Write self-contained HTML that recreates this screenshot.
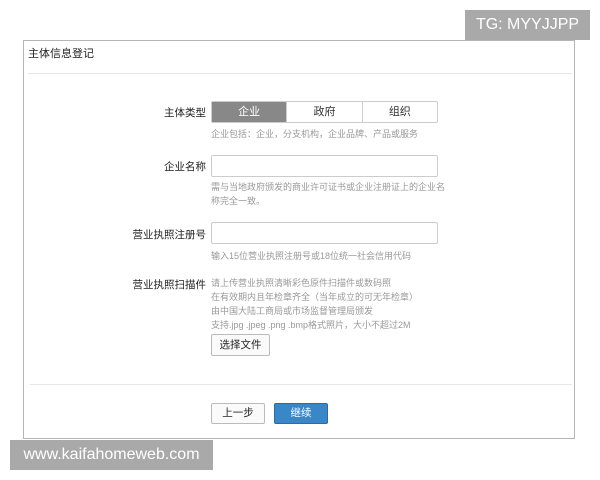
<!DOCTYPE html>
<html><head><meta charset="utf-8"><style>
*{margin:0;padding:0;box-sizing:border-box}
body{width:600px;height:480px;background:#fff;position:relative;font-family:"Liberation Sans","Noto Sans CJK SC",sans-serif;overflow:hidden}
.a{position:absolute}
.panel{left:23px;top:40px;width:552px;height:399px;border:1px solid #b5b5b5;background:#fff}
.lbl{font-size:10.5px;color:#222;text-align:right;width:120px;left:86px}
.hint{font-size:9px;color:#999;left:211px;line-height:14px}
.inp{left:211px;width:227px;height:22px;border:1px solid #ccc;border-radius:2px}
.seg{left:211px;top:101px;width:227px;height:22px;border:1px solid #ccc;border-radius:2px;display:flex;font-size:11px}
.seg div{flex:1;text-align:center;line-height:20px;border-left:1px solid #ccc;color:#333}
.seg div:first-child{border:none;background:#888;color:#fff}
.btn{border:1px solid #bbb;border-radius:2px;font-size:10.5px;text-align:center;background:#fafafa;color:#222}
</style></head><body>
<div class="a" style="left:465px;top:10px;width:125px;height:30px;background:#a9a9a9;color:#fff;font-size:16px;line-height:30px;text-align:center">TG: MYYJJPP</div>
<div class="a panel"></div>
<div class="a" style="left:28px;top:45px;font-size:11px;color:#222">主体信息登记</div>
<div class="a" style="left:28px;top:73px;width:544px;height:1px;background:#e6e6e6"></div>
<div class="a lbl" style="top:105px">主体类型</div>
<div class="a seg"><div>企业</div><div>政府</div><div>组织</div></div>
<div class="a hint" style="top:127px">企业包括：企业，分支机构，企业品牌、产品或服务</div>
<div class="a lbl" style="top:159px">企业名称</div>
<div class="a inp" style="top:155px"></div>
<div class="a hint" style="top:180px;width:236px">需与当地政府颁发的商业许可证书或企业注册证上的企业名称完全一致。</div>
<div class="a lbl" style="top:227px">营业执照注册号</div>
<div class="a inp" style="top:222px"></div>
<div class="a hint" style="top:249px">输入15位营业执照注册号或18位统一社会信用代码</div>
<div class="a lbl" style="top:277px">营业执照扫描件</div>
<div class="a hint" style="top:276px">请上传营业执照清晰彩色原件扫描件或数码照<br>在有效期内且年检章齐全（当年成立的可无年检章）<br>由中国大陆工商局或市场监督管理局颁发<br>支持.jpg .jpeg .png .bmp格式照片，大小不超过2M</div>
<div class="a btn" style="left:211px;top:334px;width:59px;height:22px;line-height:20px">选择文件</div>
<div class="a" style="left:30px;top:384px;width:542px;height:1px;background:#e6e6e6"></div>
<div class="a btn" style="left:211px;top:403px;width:54px;height:21px;line-height:19px">上一步</div>
<div class="a btn" style="left:274px;top:403px;width:54px;height:21px;line-height:19px;background:#3a87c8;border-color:#2a6aa5;color:#fff">继续</div>
<div class="a" style="left:10px;top:440px;width:203px;height:30px;background:#a9a9a9;color:#fff;font-size:16px;line-height:30px;text-align:center">www.kaifahomeweb.com</div>
</body></html>
